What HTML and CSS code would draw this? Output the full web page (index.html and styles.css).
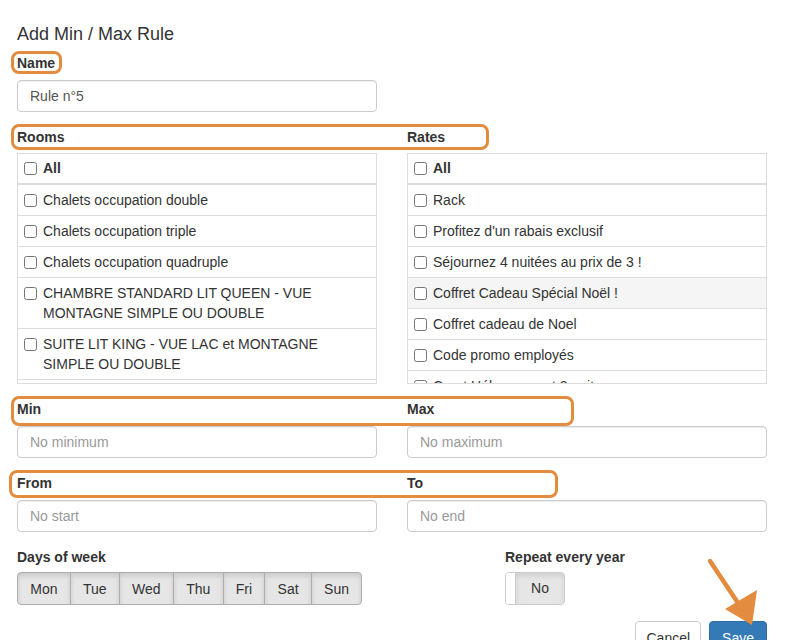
FILE: index.html
```html
<!DOCTYPE html>
<html lang="en">
<head>
  <meta charset="UTF-8">
  <meta name="viewport" content="width=device-width, initial-scale=1.0">
  <title>Add Min / Max Rule</title>
  <link rel="stylesheet" href="styles.css">
</head>
<body>
  <div class="rule-form">
    <h4 class="rule-title">Add Min / Max Rule</h4>

    <div class="field">
      <label>Name</label>
      <input type="text" class="control" value="Rule n°5">
    </div>

    <div class="row">
      <div class="col">
        <label class="list-label">Rooms</label>
        <div class="check-list">
          <div class="check-item head"><input type="checkbox"><span>All</span></div>
          <div class="check-item"><input type="checkbox"><span>Chalets occupation double</span></div>
          <div class="check-item"><input type="checkbox"><span>Chalets occupation triple</span></div>
          <div class="check-item"><input type="checkbox"><span>Chalets occupation quadruple</span></div>
          <div class="check-item"><input type="checkbox"><span>CHAMBRE STANDARD LIT QUEEN - VUE MONTAGNE SIMPLE OU DOUBLE</span></div>
          <div class="check-item"><input type="checkbox"><span>SUITE LIT KING - VUE LAC et MONTAGNE SIMPLE OU DOUBLE</span></div>
          <div class="check-item"><input type="checkbox"><span>Chalets 2 chambres</span></div>
        </div>
      </div>
      <div class="col">
        <label class="list-label">Rates</label>
        <div class="check-list">
          <div class="check-item head"><input type="checkbox"><span>All</span></div>
          <div class="check-item"><input type="checkbox"><span>Rack</span></div>
          <div class="check-item"><input type="checkbox"><span>Profitez d'un rabais exclusif</span></div>
          <div class="check-item"><input type="checkbox"><span>Séjournez 4 nuitées au prix de 3 !</span></div>
          <div class="check-item hover"><input type="checkbox"><span>Coffret Cadeau Spécial Noël !</span></div>
          <div class="check-item"><input type="checkbox"><span>Coffret cadeau de Noel</span></div>
          <div class="check-item"><input type="checkbox"><span>Code promo employés</span></div>
          <div class="check-item"><input type="checkbox"><span>Court Hébergement 2 nuits</span></div>
        </div>
      </div>
    </div>

    <div class="row">
      <div class="col field">
        <label>Min</label>
        <input type="text" class="control" placeholder="No minimum">
      </div>
      <div class="col field">
        <label>Max</label>
        <input type="text" class="control" placeholder="No maximum">
      </div>
    </div>

    <div class="row">
      <div class="col field">
        <label>From</label>
        <input type="text" class="control" placeholder="No start">
      </div>
      <div class="col field">
        <label>To</label>
        <input type="text" class="control" placeholder="No end">
      </div>
    </div>

    <div class="bottom-row">
      <div class="days">
        <label>Days of week</label>
        <div class="btn-group">
          <button type="button" class="day">Mon</button>
          <button type="button" class="day">Tue</button>
          <button type="button" class="day">Wed</button>
          <button type="button" class="day">Thu</button>
          <button type="button" class="day">Fri</button>
          <button type="button" class="day">Sat</button>
          <button type="button" class="day">Sun</button>
        </div>
      </div>
      <div class="repeat">
        <label>Repeat every year</label>
        <div class="switch"><span class="handle"></span><span class="state">No</span></div>
      </div>
    </div>

    <div class="footer">
      <button type="button" class="btn btn-default">Cancel</button>
      <button type="button" class="btn btn-primary">Save</button>
    </div>
  </div>

  <!-- annotation marks drawn over the form -->
  <div class="mark mark-name"></div>
  <div class="mark mark-rooms"></div>
  <div class="mark mark-min"></div>
  <div class="mark mark-from"></div>
  <svg class="arrow" width="792" height="640" viewBox="0 0 792 640">
    <line x1="710" y1="561" x2="738" y2="603" stroke="#e38b3e" stroke-width="4.5" stroke-linecap="round"/>
    <polygon points="725,609 757,590 752,625" fill="#e38b3e"/>
  </svg>
</body>
</html>
```

FILE: styles.css
```css
body {
  margin: 0;
  font-family: "Liberation Sans", Arial, sans-serif;
  font-size: 14px;
  line-height: 20px;
  color: #333;
  background: #fff;
  overflow: hidden;
}
.rule-form {
  width: 750px;
  padding: 24px 25px 0 17px;
}
.rule-title {
  margin: 0 0 9px;
  font-size: 18px;
  font-weight: normal;
  line-height: 20px;
}
label {
  display: block;
  font-weight: bold;
  margin-bottom: 7px;
}
.field {
  margin-bottom: 15px;
}
.control {
  display: block;
  box-sizing: border-box;
  width: 360px;
  height: 32px;
  padding: 6px 12px;
  font-family: inherit;
  font-size: 14px;
  color: #555;
  border: 1px solid #ccc;
  border-radius: 4px;
  box-shadow: inset 0 1px 1px rgba(0, 0, 0, 0.075);
}
.control::placeholder {
  color: #999;
}
.row {
  display: flex;
  gap: 30px;
}
.col {
  width: 360px;
}
.list-label {
  margin-bottom: 6px;
}
.check-list {
  box-sizing: border-box;
  width: 360px;
  height: 231px;
  margin-bottom: 15px;
  border: 1px solid #ddd;
  overflow: hidden;
}
.check-item {
  display: flex;
  align-items: flex-start;
  padding: 5px 8px 5px 6px;
  border-bottom: 1px solid #ddd;
}
.check-item.head {
  padding-top: 4px;
  padding-bottom: 5px;
  border-bottom: 2px solid #ddd;
  font-weight: bold;
}
.check-item.hover {
  background: #f5f5f5;
}
.check-item input {
  flex: none;
  width: 13px;
  height: 13px;
  margin: 4px 6px 0 0;
}
.bottom-row {
  display: flex;
}
.days {
  width: 488px;
}
.days label, .repeat label {
  margin-bottom: 5px;
}
.btn-group {
  display: flex;
}
.day {
  height: 33px;
  padding: 0 12.25px;
  margin-left: -1px;
  font-family: inherit;
  font-size: 14px;
  color: #333;
  background: #e6e6e6;
  border: 1px solid #adadad;
  box-shadow: inset 0 3px 5px rgba(0, 0, 0, 0.125);
}
.day:first-child {
  margin-left: 0;
  border-radius: 4px 0 0 4px;
}
.day:last-child {
  border-radius: 0 4px 4px 0;
}
.switch {
  display: flex;
  box-sizing: border-box;
  width: 60px;
  height: 33px;
  border: 1px solid #ccc;
  border-radius: 4px;
  overflow: hidden;
}
.switch .handle {
  width: 9px;
  background: #fff;
  border-right: 1px solid #ccc;
}
.switch .state {
  flex: 1;
  text-align: center;
  line-height: 31px;
  background: #e6e6e6;
  box-shadow: inset 0 3px 5px rgba(0, 0, 0, 0.1);
}
.footer {
  display: flex;
  justify-content: flex-end;
  gap: 8px;
  margin-top: 16px;
}
.btn {
  height: 34px;
  padding: 0 12px;
  font-family: inherit;
  font-size: 14px;
  border-radius: 4px;
  border: 1px solid #ccc;
}
.btn-default {
  padding: 0 10px;
  background: #fff;
  color: #333;
}
.btn-primary {
  background: #337ab7;
  border-color: #2e6da4;
  color: #fff;
}
.mark {
  position: absolute;
  border: 3px solid #e38b3e;
  border-radius: 8px;
  box-sizing: border-box;
}
.mark-name {
  left: 11px;
  top: 51px;
  width: 51px;
  height: 23px;
}
.mark-rooms {
  left: 11px;
  top: 124px;
  width: 478px;
  height: 26px;
}
.mark-min {
  left: 11px;
  top: 396px;
  width: 563px;
  height: 30px;
}
.mark-from {
  left: 9px;
  top: 470px;
  width: 549px;
  height: 28px;
}
.arrow {
  position: absolute;
  left: 0;
  top: 0;
  pointer-events: none;
}
```
